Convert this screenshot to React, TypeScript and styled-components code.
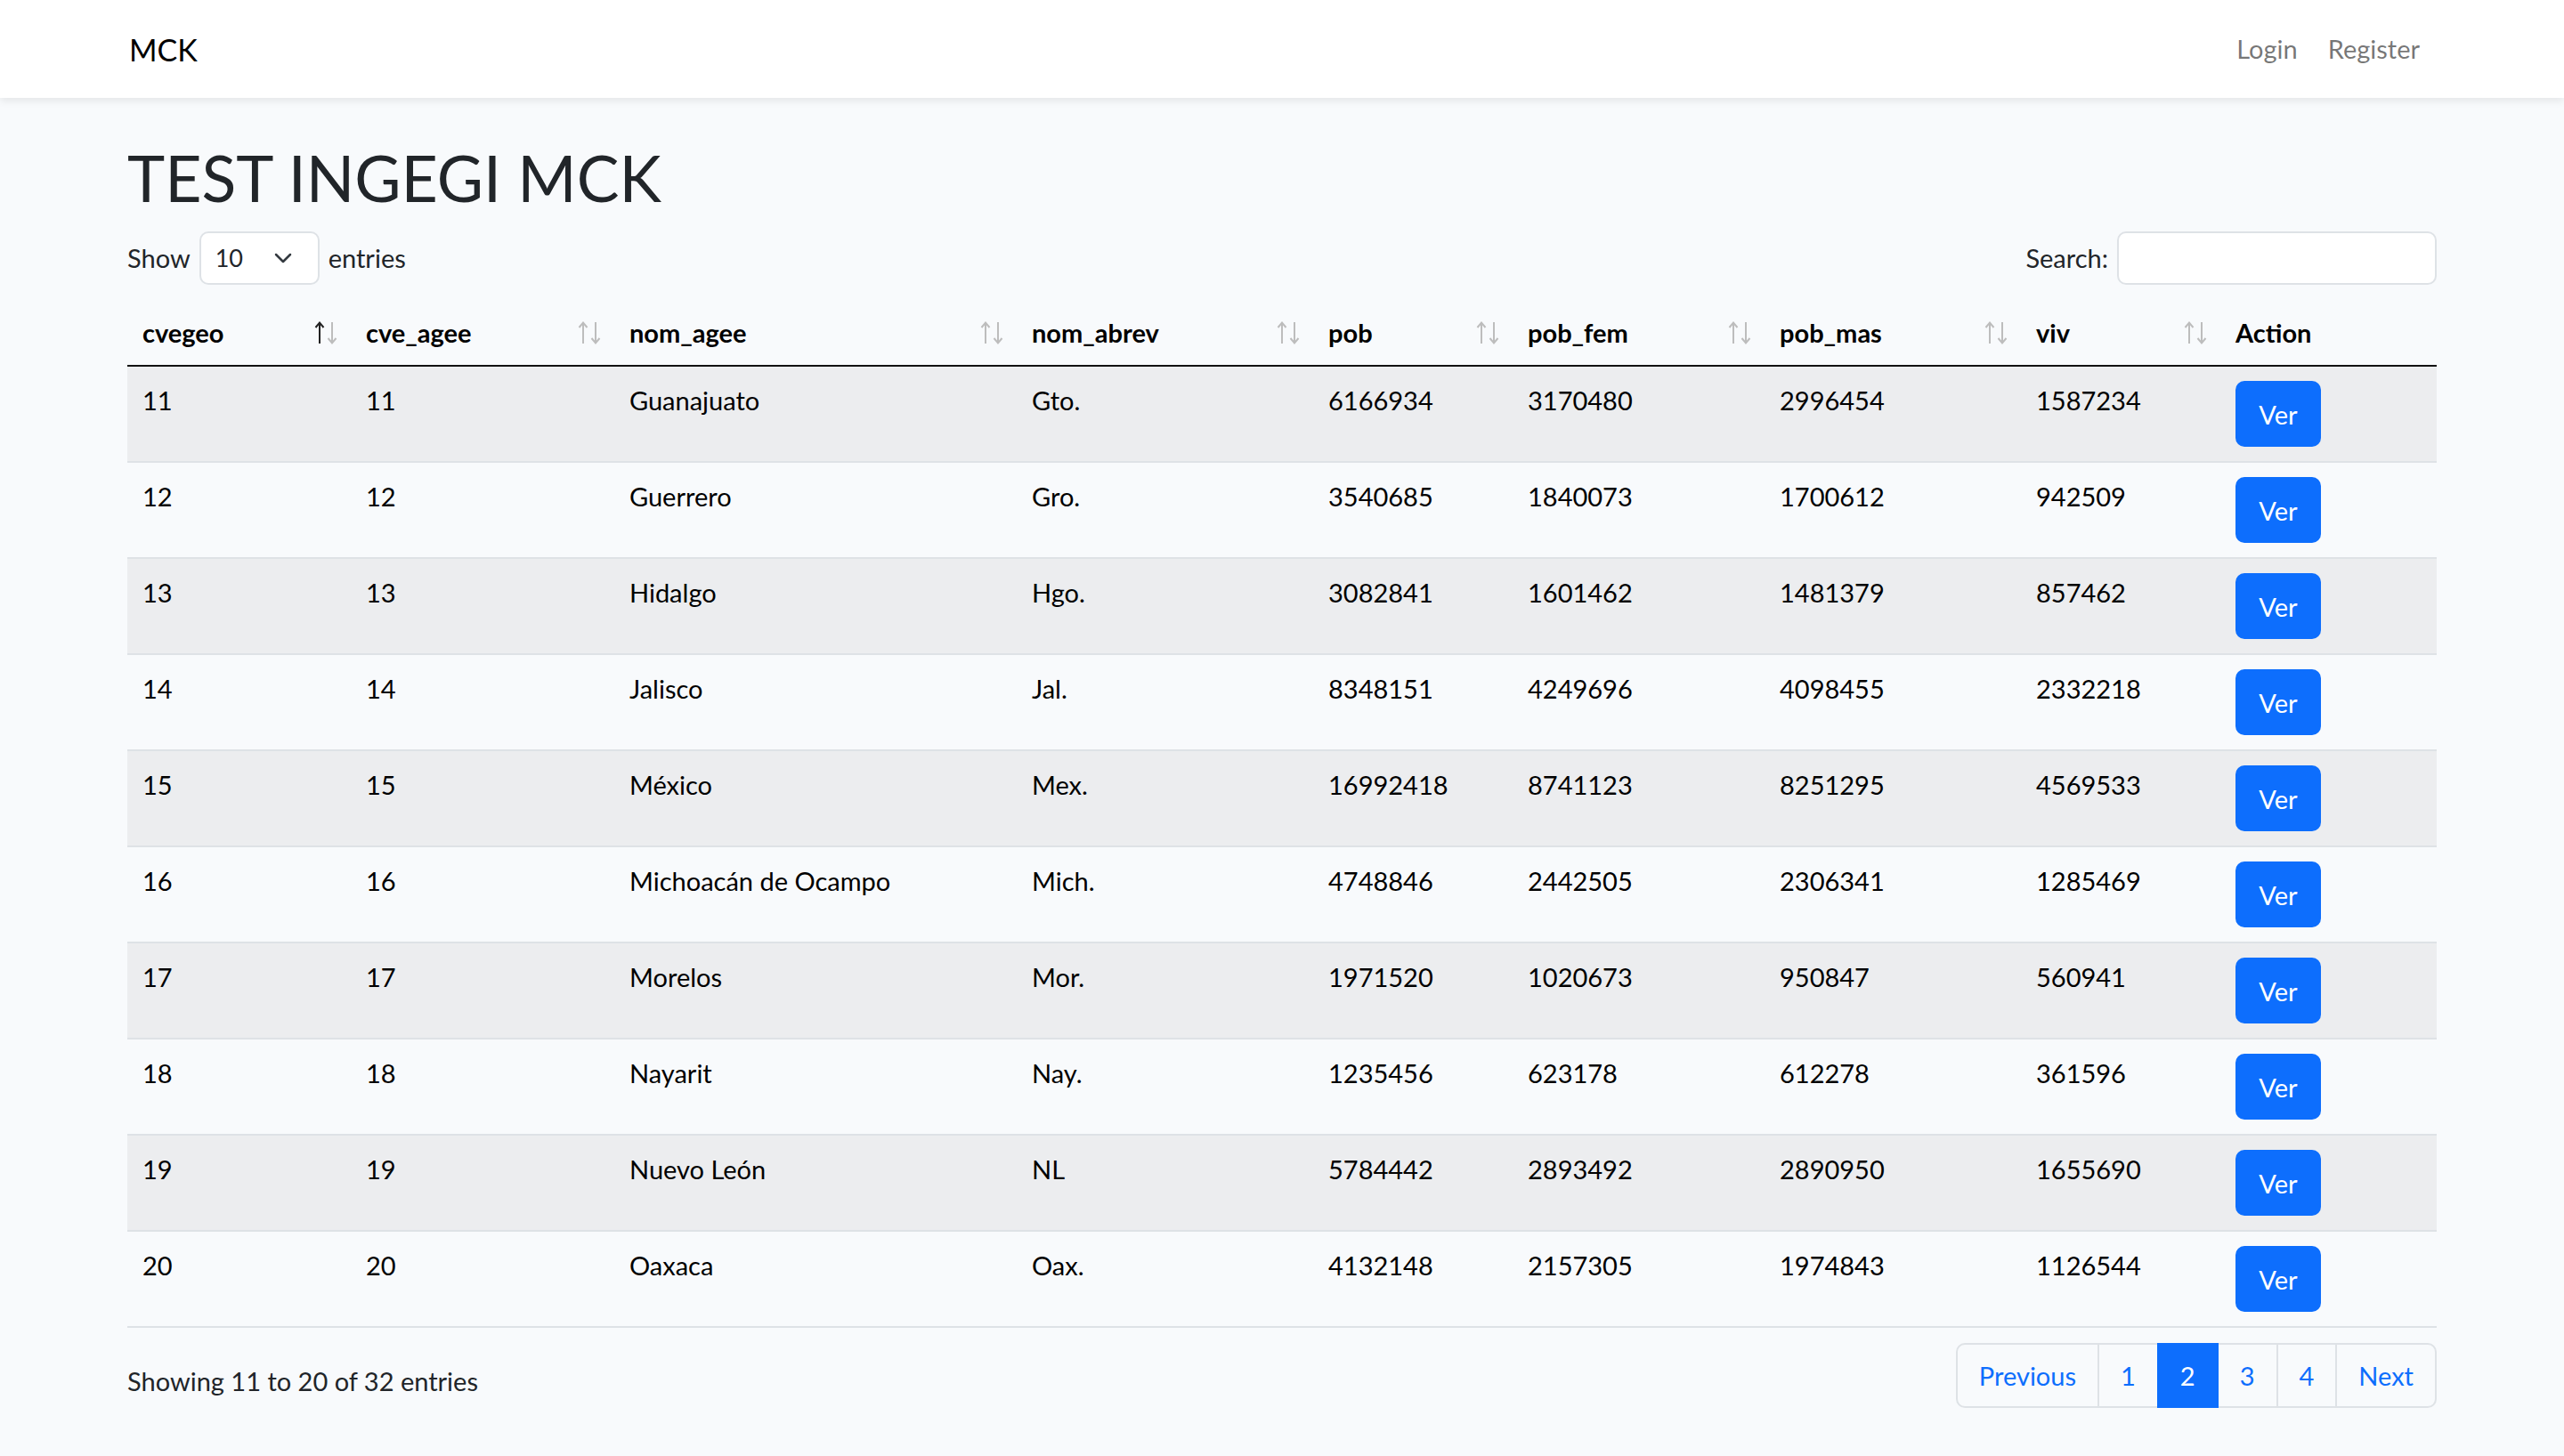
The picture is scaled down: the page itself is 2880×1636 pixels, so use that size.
import styled, { createGlobalStyle } from "styled-components";

const GlobalStyle = createGlobalStyle`
  body {
    margin: 0;
    background-color: #f8fafc;
    color: #212529;
    font-family: Lato, "Noto Sans", sans-serif;
    font-size: 29px;
    line-height: 1.5;
  }
  * {
    box-sizing: border-box;
  }
`;

const NavBar = styled.nav`
  height: 110px;
  background-color: #fff;
  box-shadow: 0 4px 8px rgba(0, 0, 0, 0.075);
  display: flex;
  align-items: center;
  justify-content: space-between;
  padding: 0 145px;
`;

const Brand = styled.a`
  font-size: 34px;
  color: #000;
  text-decoration: none;
`;

const NavLinks = styled.div`
  display: flex;
  align-items: center;
`;

const NavLink = styled.a`
  color: rgba(0, 0, 0, 0.55);
  text-decoration: none;
  padding: 0 17px;
`;

const Main = styled.main`
  padding: 0 143px;
`;

const Title = styled.h1`
  font-size: 71.5px;
  font-weight: 400;
  line-height: 1.2;
  margin: 47px 0 17px;
`;

const Controls = styled.div`
  display: flex;
  align-items: center;
  justify-content: space-between;
  height: 60px;
`;

const Label = styled.label`
  display: flex;
  align-items: center;
  gap: 10px;
`;

const SelectBox = styled.div`
  width: 135px;
  height: 60px;
  border: 2px solid #dee2e6;
  border-radius: 10px;
  background-color: #fff;
  display: flex;
  align-items: center;
  justify-content: space-between;
  padding: 0 28px 0 16px;
  font-size: 27px;
`;

const SearchInput = styled.input`
  width: 359px;
  height: 60px;
  border: 2px solid #dee2e6;
  border-radius: 10px;
  background-color: #fff;
  outline: none;
`;

const Table = styled.table`
  width: 100%;
  border-collapse: collapse;
  table-layout: fixed;
  margin-top: 17px;
`;

const Th = styled.th`
  text-align: left;
  font-weight: 700;
  color: #000;
  padding: 15px 14px 15px 17px;
  border-bottom: 2px solid #111;
  vertical-align: middle;
`;

const HeadInner = styled.div`
  display: flex;
  align-items: center;
  justify-content: space-between;
`;

const Tr = styled.tr<{ $striped: boolean }>`
  background-color: ${(p) => (p.$striped ? "#ecedef" : "transparent")};
`;

const Td = styled.td`
  padding: 16px 17px;
  border-bottom: 2px solid #dee2e6;
  vertical-align: top;
  color: #000;
`;

const ViewButton = styled.button`
  width: 96px;
  height: 74px;
  border: none;
  border-radius: 10px;
  background-color: #0d6efd;
  color: #fff;
  font-family: inherit;
  font-size: 29px;
  cursor: pointer;
`;

const Footer = styled.div`
  display: flex;
  justify-content: space-between;
  align-items: flex-start;
  margin-top: 17px;
`;

const Info = styled.div`
  padding-top: 21px;
`;

const Pagination = styled.ul`
  display: flex;
  list-style: none;
  margin: 0;
  padding: 0;
  height: 73px;
`;

const PageItem = styled.li<{ $active?: boolean }>`
  display: flex;
  align-items: center;
  justify-content: center;
  padding: 0 24px;
  min-width: 67px;
  border: 2px solid ${(p) => (p.$active ? "#0d6efd" : "#dee2e6")};
  margin-left: -2px;
  background-color: ${(p) => (p.$active ? "#0d6efd" : "transparent")};
  color: ${(p) => (p.$active ? "#fff" : "#0d6efd")};
  position: relative;
  z-index: ${(p) => (p.$active ? 1 : 0)};

  &:first-child {
    margin-left: 0;
    border-radius: 10px 0 0 10px;
  }
  &:last-child {
    border-radius: 0 10px 10px 0;
  }
`;

const columns = [
  { key: "cvegeo", width: 251 },
  { key: "cve_agee", width: 296 },
  { key: "nom_agee", width: 452 },
  { key: "nom_abrev", width: 333 },
  { key: "pob", width: 224 },
  { key: "pob_fem", width: 283 },
  { key: "pob_mas", width: 288 },
  { key: "viv", width: 224 },
];

const rows = [
  ["11", "11", "Guanajuato", "Gto.", "6166934", "3170480", "2996454", "1587234"],
  ["12", "12", "Guerrero", "Gro.", "3540685", "1840073", "1700612", "942509"],
  ["13", "13", "Hidalgo", "Hgo.", "3082841", "1601462", "1481379", "857462"],
  ["14", "14", "Jalisco", "Jal.", "8348151", "4249696", "4098455", "2332218"],
  ["15", "15", "México", "Mex.", "16992418", "8741123", "8251295", "4569533"],
  ["16", "16", "Michoacán de Ocampo", "Mich.", "4748846", "2442505", "2306341", "1285469"],
  ["17", "17", "Morelos", "Mor.", "1971520", "1020673", "950847", "560941"],
  ["18", "18", "Nayarit", "Nay.", "1235456", "623178", "612278", "361596"],
  ["19", "19", "Nuevo León", "NL", "5784442", "2893492", "2890950", "1655690"],
  ["20", "20", "Oaxaca", "Oax.", "4132148", "2157305", "1974843", "1126544"],
];

function SortIcon({ active }: { active?: boolean }) {
  const up = active ? "#222" : "#bdbdbd";
  return (
    <svg width="27" height="28" viewBox="0 0 27 28" fill="none" strokeWidth="2">
      <g stroke={up}>
        <line x1="6" y1="3" x2="6" y2="26" />
        <polyline points="1.5,8 6,2.5 10.5,8" />
      </g>
      <g stroke="#bdbdbd">
        <line x1="20" y1="2" x2="20" y2="25" />
        <polyline points="15.5,20 20,25.5 24.5,20" />
      </g>
    </svg>
  );
}

function Chevron() {
  return (
    <svg width="22" height="14" viewBox="0 0 22 14" fill="none">
      <polyline points="3,3 11,11 19,3" stroke="#343a40" strokeWidth="2.5" strokeLinecap="round" strokeLinejoin="round" />
    </svg>
  );
}

export default function App() {
  return (
    <>
      <GlobalStyle />
      <NavBar>
        <Brand href="#">MCK</Brand>
        <NavLinks>
          <NavLink href="#">Login</NavLink>
          <NavLink href="#">Register</NavLink>
        </NavLinks>
      </NavBar>
      <Main>
        <Title>TEST INGEGI MCK</Title>
        <Controls>
          <Label>
            Show
            <SelectBox>
              <span>10</span>
              <Chevron />
            </SelectBox>
            entries
          </Label>
          <Label>
            Search:
            <SearchInput type="search" />
          </Label>
        </Controls>
        <Table>
          <colgroup>
            {columns.map((c) => (
              <col key={c.key} style={{ width: c.width }} />
            ))}
            <col />
          </colgroup>
          <thead>
            <tr>
              {columns.map((c, i) => (
                <Th key={c.key}>
                  <HeadInner>
                    <span>{c.key}</span>
                    <SortIcon active={i === 0} />
                  </HeadInner>
                </Th>
              ))}
              <Th>Action</Th>
            </tr>
          </thead>
          <tbody>
            {rows.map((r, i) => (
              <Tr key={r[0]} $striped={i % 2 === 0}>
                {r.map((v, j) => (
                  <Td key={j}>{v}</Td>
                ))}
                <Td>
                  <ViewButton>Ver</ViewButton>
                </Td>
              </Tr>
            ))}
          </tbody>
        </Table>
        <Footer>
          <Info>Showing 11 to 20 of 32 entries</Info>
          <Pagination>
            <PageItem>Previous</PageItem>
            <PageItem>1</PageItem>
            <PageItem $active>2</PageItem>
            <PageItem>3</PageItem>
            <PageItem>4</PageItem>
            <PageItem>Next</PageItem>
          </Pagination>
        </Footer>
      </Main>
    </>
  );
}
